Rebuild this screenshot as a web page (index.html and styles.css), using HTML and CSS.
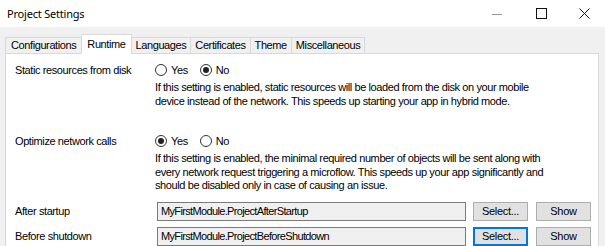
FILE: index.html
```html
<!DOCTYPE html>
<html lang="en">
<head>
    <meta charset="UTF-8">
    <title>Project Settings</title>
    <link rel="stylesheet" href="styles.css">
</head>
<body>
    <div class="window">
        <div class="titlebar">
            <span class="title">Project Settings</span>
            <div class="controls">
                <span class="ctl"><svg width="10" height="10" viewBox="0 0 10 10"><path d="M0 5.5h10" stroke="#999" stroke-width="1"/></svg></span>
                <span class="ctl"><svg width="11" height="11" viewBox="0 0 11 11"><rect x="0.5" y="0.5" width="10" height="10" fill="none" stroke="#111" stroke-width="1"/></svg></span>
                <span class="ctl"><svg width="11" height="11" viewBox="0 0 11 11"><path d="M0.5 0.5l10 10M10.5 0.5l-10 10" stroke="#111" stroke-width="1"/></svg></span>
            </div>
        </div>

        <!-- tabs -->
        <div class="tabs">
            <div class="tab">Configurations</div>
            <div class="tab active">Runtime</div>
            <div class="tab">Languages</div>
            <div class="tab">Certificates</div>
            <div class="tab">Theme</div>
            <div class="tab">Miscellaneous</div>
        </div>

        <div class="panel">
            <div class="row row-first">
                <div class="label">Static resources from disk</div>
                <div class="options">
                    <label class="radio"><span class="dot"></span>Yes</label>
                    <label class="radio"><span class="dot checked"></span>No</label>
                </div>
            </div>
            <p class="desc">If this setting is enabled, static resources will be loaded from the disk on your mobile<br>device instead of the network. This speeds up starting your app in hybrid mode.</p>

            <div class="row row-second">
                <div class="label">Optimize network calls</div>
                <div class="options">
                    <label class="radio"><span class="dot checked"></span>Yes</label>
                    <label class="radio"><span class="dot"></span>No</label>
                </div>
            </div>
            <p class="desc">If this setting is enabled, the minimal required number of objects will be sent along with<br>every network request triggering a microflow. This speeds up your app significantly and<br>should be disabled only in case of causing an issue.</p>

            <div class="field field-first">
                <div class="label">After startup</div>
                <div class="input">MyFirstModule.ProjectAfterStartup</div>
                <button class="btn">Select...</button>
                <button class="btn">Show</button>
            </div>
            <div class="field">
                <div class="label">Before shutdown</div>
                <div class="input">MyFirstModule.ProjectBeforeShutdown</div>
                <button class="btn focus">Select...</button>
                <button class="btn">Show</button>
            </div>
        </div>
    </div>
</body>
</html>
```

FILE: styles.css
```css
body {
    margin: 0;
    font-family: "Liberation Sans", Arial, sans-serif;
    font-size: 11px;
    letter-spacing: -0.4px;
    color: #000;
    background-color: #f0f0f0;
}

.window {
    width: 605px;
    height: 246px;
    overflow: hidden;
    display: flex;
    flex-direction: column;
}

.titlebar {
    height: 27px;
    background-color: #fff;
    display: flex;
    align-items: center;
    justify-content: space-between;
    flex-shrink: 0;
}

.title {
    font-family: "Noto Sans", "Open Sans", sans-serif;
    font-size: 11px;
    letter-spacing: -0.2px;
    padding-left: 7px;
    color: #000;
}

.controls {
    display: flex;
    height: 100%;
}

.ctl {
    width: 44px;
    display: flex;
    align-items: center;
    justify-content: center;
}

.ctl:last-child {
    width: 42px;
}

/* tabs */
.tabs {
    display: flex;
    align-items: flex-end;
    padding: 6px 0 0 5px;
    height: 20px;
    flex-shrink: 0;
    position: relative;
    z-index: 1;
}

.tab {
    height: 16px;
    line-height: 15px;
    padding: 0 4px;
    border: 1px solid #d9d9d9;
    border-bottom: none;
    border-right: none;
    background-color: #f0f0f0;
    box-sizing: border-box;
}

.tab:first-child {
    padding: 0 5px;
}

.tab:nth-child(6) {
    border-right: 1px solid #d9d9d9;
}

.tab.active {
    height: 20px;
    line-height: 18px;
    background-color: #fff;
    margin-bottom: -1px;
    border-right: 1px solid #d9d9d9;
    padding: 0 5px;
}

.tab.active + .tab {
    border-left: none;
}

/* content */
.panel {
    flex: 1;
    margin: 0 6px 0 5px;
    background-color: #fff;
    border: 1px solid #d9d9d9;
    border-bottom: none;
    padding: 0 0 0 9px;
}

.row {
    display: flex;
    align-items: center;
    height: 18px;
}

.row-first {
    margin-top: 7px;
}

.row-second {
    margin-top: 24px;
}

.label {
    width: 140px;
    flex-shrink: 0;
}

.options {
    display: flex;
    align-items: center;
}

.radio {
    display: flex;
    align-items: center;
    margin-right: 12px;
}

.dot {
    width: 12px;
    height: 12px;
    border: 1px solid #333;
    border-radius: 50%;
    box-sizing: border-box;
    margin-right: 4px;
    display: flex;
    align-items: center;
    justify-content: center;
}

.dot.checked::after {
    content: "";
    width: 6px;
    height: 6px;
    border-radius: 50%;
    background-color: #222;
}

.desc {
    margin: 2px 0 0 140px;
    line-height: 13.5px;
}

.field {
    display: flex;
    align-items: center;
    height: 19px;
    margin-top: 6px;
}

.field-first {
    margin-top: 9px;
}

.input {
    width: 309px;
    height: 19px;
    box-sizing: border-box;
    border: 1px solid #7a7a7a;
    background-color: #f0f0f0;
    margin-left: 2px;
    padding-left: 3px;
    line-height: 17px;
    letter-spacing: -0.65px;
    white-space: nowrap;
    overflow: hidden;
}

.btn {
    font-family: inherit;
    font-size: 11px;
    letter-spacing: -0.3px;
    height: 19px;
    width: 55px;
    padding: 0;
    margin-left: 7px;
    border: 1px solid #adadad;
    background-color: #e1e1e1;
    color: #000;
}

.btn + .btn {
    margin-left: 8px;
}

.btn.focus {
    border: 2px solid #0078d7;
}
```
